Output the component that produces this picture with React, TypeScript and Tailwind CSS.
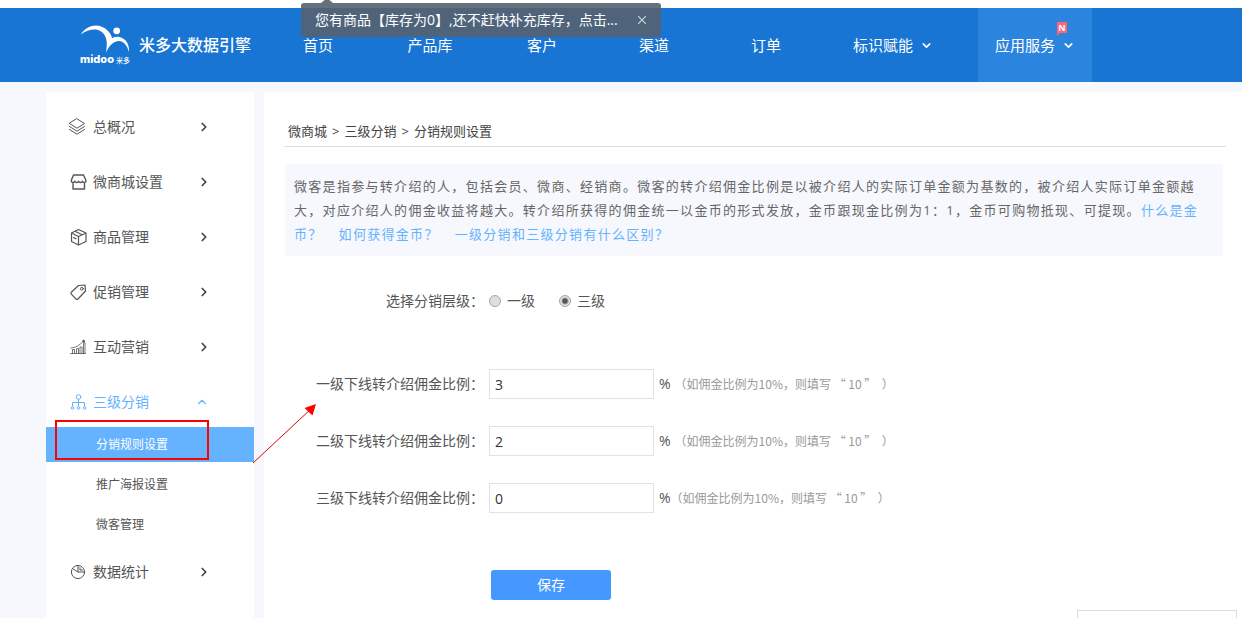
import { useState, type ReactNode } from "react";
import { ChevronDown, ChevronRight, ChevronUp, X } from "lucide-react";

const NAV = ["首页", "产品库", "客户", "渠道", "订单"];

const SUB_ITEMS = ["分销规则设置", "推广海报设置", "微客管理"];

const RATE_FIELDS = [
  { id: "rate-1", label: "一级下线转介绍佣金比例：", value: "3", hintGap: "ml-1" },
  { id: "rate-2", label: "二级下线转介绍佣金比例：", value: "2", hintGap: "ml-1" },
  { id: "rate-3", label: "三级下线转介绍佣金比例：", value: "0", hintGap: "ml-0" },
];

function Icon({ children }: { children: ReactNode }) {
  return (
    <svg
      width="18"
      height="18"
      viewBox="0 0 18 18"
      fill="none"
      stroke="currentColor"
      strokeLinejoin="round"
      strokeLinecap="round"
      className="flex-none"
      aria-hidden="true"
    >
      {children}
    </svg>
  );
}

const ICONS = {
  overview: (
    <Icon>
      <path d="M8 .8 15.500 5.500 8 10.200.5 5.500Z" />
      <path d="M.5 8.500 8 13.200l7.500-4.700M.5 11.500 8 16.200l7.500-4.700" />
    </Icon>
  ),
  shop: (
    <Icon>
      <path strokeWidth="1.4" d="M4.500 2h10L17 7.500c0 2.500-2.800 2.700-3.600.7-.6 1.800-3.200 1.800-3.800 0-.6 1.800-3.200 1.800-3.800 0-.8 2-3.600 1.800-3.600-.7ZM4 10.500v5.500h11.500v-5.500" />
    </Icon>
  ),
  goods: (
    <Icon>
      <path strokeWidth="1.2" d="M9.500 1.500 17 5v8.500L9.500 17 2.500 13.500V5ZM2.500 5l7 3.500L17 5M9.500 8.500V17M6 3.300l7.200 3.500M4.500 9.500l2.500 1.300" />
    </Icon>
  ),
  promo: (
    <Icon>
      <path strokeWidth="1.2" d="M9.500 2.500 16 2l.5 6-7.500 8c-.6.6-1.400.6-2 0L2.300 11.200c-.6-.6-.6-1.400 0-2Z" />
      <circle cx="12.800" cy="5.700" r="1.400" />
    </Icon>
  ),
  interact: (
    <Icon>
      <path strokeWidth=".8" d="M1.500 15.500h15M3.500 15.500v-4h2v4M7.500 15.500v-5h2v5M11 15.500v-6.500h2v6.500M14.500 15.500v-11h1.500v11" />
      <path strokeWidth=".8" d="M2 10c5-.5 8-2.500 12-6.500" />
      <circle cx="14.500" cy="3" r=".8" fill="currentColor" />
    </Icon>
  ),
  distribution: (
    <Icon>
      <circle cx="9.500" cy="4" r="2.300" />
      <path d="M9.500 6.500v7M3.500 13.500v-4h12v4" />
      <circle cx="3.500" cy="15" r="1.300" />
      <circle cx="9.500" cy="15" r="1.300" />
      <circle cx="15.500" cy="15" r="1.300" />
    </Icon>
  ),
  stats: (
    <Icon>
      <circle cx="9" cy="9" r="6.600" />
      <path d="M9 2.400V9h6.600M9 9 3.500 5.500M11 4.500v2.500h2.500" />
    </Icon>
  ),
};

function Logo() {
  return (
    <a href="#" className="flex w-[182px] flex-none items-center gap-[9px] text-white">
      <svg width="50" height="40" viewBox="0 0 50 40" fill="currentColor" className="flex-none" aria-label="midoo 米多">
        <path d="M.7 9.500C8-1.500 20-1.500 27 5c3 2.800 4.500 5 5 8.200 2.500-1.300 5.500-1.700 8-1C46 14 49.500 19 49 27 47 20 43.500 16 39 16c-6 .3-10 5-13 11.500.8-6 1.500-10.500-.5-15.500C22 3 11 2 .7 9.500Z" />
        <circle cx="36.700" cy="5.800" r="3.400" />
        <text x="0" y="38" fontSize="11" fontWeight="800" fontFamily="Inter, sans-serif">
          midoo
        </text>
        <text x="36" y="38" fontSize="7" fontWeight="500" fontFamily="Noto Sans CJK SC, sans-serif">
          米多
        </text>
      </svg>
      <span className="whitespace-nowrap text-base font-medium">米多大数据引擎</span>
    </a>
  );
}

function Header() {
  return (
    <header className="mt-2 flex h-[74px] flex-none bg-[#1875d3] pl-20 text-[15px] text-white">
      <Logo />
      <nav className="flex">
        {NAV.map((name) => (
          <a key={name} href="#" className="flex w-28 items-center justify-center">
            {name}
          </a>
        ))}
        <a href="#" className="mx-[14px] flex w-[114px] items-center gap-[7px] pl-[17px]">
          标识赋能
          <ChevronDown size={13} strokeWidth={3} />
        </a>
        <a href="#" className="relative mx-[14px] flex w-[114px] items-center gap-[7px] bg-[#2b84de] pl-[17px]">
          应用服务
          <ChevronDown size={13} strokeWidth={3} />
          <span className="absolute left-[79px] top-[14px] h-[11px] w-[10px] bg-[#ff6478] text-center text-[9px] font-bold leading-[11px]">
            N
            <span className="absolute left-0 top-full border-r-[3px] border-t-[3px] border-r-transparent border-t-[#ff6478]" />
          </span>
        </a>
      </nav>
    </header>
  );
}

function StockToast({ onClose }: { onClose: () => void }) {
  return (
    <div className="absolute left-[301px] top-[3px] flex h-[34px] w-[360px] items-center justify-between rounded-[3px] bg-[#556270]/90 pl-[14px] pr-3 text-sm text-white">
      <span className="absolute -top-[5px] left-5 border-x-[6px] border-b-[5px] border-x-transparent border-b-[#556270]/90" />
      <span className="whitespace-nowrap">您有商品【库存为0】,还不赶快补充库存，点击...</span>
      <button type="button" aria-label="关闭" onClick={onClose} className="cursor-pointer text-[#c3c9cf]">
        <X size={14} strokeWidth={2} />
      </button>
    </div>
  );
}

function MenuRow({ icon, name }: { icon: ReactNode; name: string }) {
  return (
    <li className="mb-[5px]">
      <a href="#" className="flex h-[50px] items-center pl-[23px] pr-[43px]">
        {icon}
        <span className="ml-[6px] flex-1">{name}</span>
        <ChevronRight size={14} strokeWidth={3} className="text-[#444]" />
      </a>
    </li>
  );
}

function Sidebar() {
  return (
    <aside className="w-[208px] flex-none bg-white pt-[10px] text-sm text-[#555]">
      <ul>
        <MenuRow icon={ICONS.overview} name="总概况" />
        <MenuRow icon={ICONS.shop} name="微商城设置" />
        <MenuRow icon={ICONS.goods} name="商品管理" />
        <MenuRow icon={ICONS.promo} name="促销管理" />
        <MenuRow icon={ICONS.interact} name="互动营销" />
        <li className="relative mb-[5px]">
          <a href="#" className="flex h-[50px] items-center pl-[23px] pr-[45px] text-[#65b2ff]">
            {ICONS.distribution}
            <span className="ml-[6px] flex-1">三级分销</span>
            <ChevronUp size={14} strokeWidth={2} />
          </a>
          <ul className="flex flex-col gap-[5px] text-xs">
            {SUB_ITEMS.map((name, i) => (
              <li key={name}>
                <a
                  href="#"
                  className={`flex h-[35px] items-center pl-[50px] ${i === 0 ? "bg-[#65b2ff] text-white" : ""}`}
                >
                  {name}
                </a>
              </li>
            ))}
          </ul>
          {/* red frame and arrow pointing from the menu to the form */}
          <span className="pointer-events-none absolute left-[9px] top-[43px] h-10 w-[154px] border-2 border-[#f00]" />
          <svg
            width="66"
            height="62"
            viewBox="0 0 66 62"
            className="pointer-events-none absolute left-[206px] top-[26px]"
            aria-hidden="true"
          >
            <path d="M1 60 60 5" stroke="#d00" />
            <path d="M64 1 52.500 5 60.500 12.500Z" fill="#f00" />
          </svg>
        </li>
        <MenuRow icon={ICONS.stats} name="数据统计" />
      </ul>
    </aside>
  );
}

function LevelRadio({ name, checked, onChange }: { name: string; checked: boolean; onChange: () => void }) {
  return (
    <label className="flex items-center gap-[6px]">
      <input
        type="radio"
        name="level"
        checked={checked}
        onChange={onChange}
        className="h-3 w-3 appearance-none rounded-full border border-[#a6a6a6] bg-[#dedede] checked:bg-[radial-gradient(circle,#555_0_2px,#e4e4e4_4px)]"
      />
      {name}
    </label>
  );
}

export default function App() {
  const [toast, setToast] = useState(true);
  const [level, setLevel] = useState("三级");

  return (
    <div className="relative flex min-h-screen flex-col overflow-hidden bg-white font-['Open_Sans','Noto_Sans_CJK_SC',sans-serif]">
      <Header />
      <div className="flex flex-1 gap-[10px] bg-[#f6f8fd] pl-[46px] pt-[10px]">
        <Sidebar />
        <main className="min-w-0 flex-1 bg-white pl-5 pr-4 text-sm text-[#555]">
          <nav className="flex gap-[5px] border-b border-[#ddd] pb-[5px] pl-1 pt-[29px] text-[13px] leading-5 text-[#444]">
            <a href="#">微商城</a>
            <span>&gt;</span>
            <a href="#">三级分销</a>
            <span>&gt;</span>
            <span>分销规则设置</span>
          </nav>

          <p className="ml-px mr-[3px] mt-[17px] bg-[#f6f8fd] py-[10px] pl-[9px] pr-[19px] text-[13px] leading-6 tracking-widest text-[#666]">
            微客是指参与转介绍的人，包括会员、微商、经销商。微客的转介绍佣金比例是以被介绍人的实际订单金额为基数的，被介绍人实际订单金额越大，对应介绍人的佣金收益将越大。转介绍所获得的佣金统一以金币的形式发放，金币跟现金比例为1：1，金币可购物抵现、可提现。
            <a href="#" className="mr-4 text-[#65b2ff]">什么是金币？</a>
            <a href="#" className="mr-4 text-[#65b2ff]">如何获得金币？</a>
            <a href="#" className="text-[#65b2ff]">一级分销和三级分销有什么区别？</a>
          </p>

          <form onSubmit={(e) => e.preventDefault()}>
            <fieldset className="mt-[35px] flex h-5 items-center">
              <legend className="float-left w-[200px] text-right">选择分销层级：</legend>
              <div className="ml-[5px] flex gap-6">
                {["一级", "三级"].map((name) => (
                  <LevelRadio key={name} name={name} checked={level === name} onChange={() => setLevel(name)} />
                ))}
              </div>
            </fieldset>

            <div className="mt-[58px] flex flex-col gap-[27px]">
              {RATE_FIELDS.map((field) => (
                <div key={field.id} className="flex h-[30px] items-center">
                  <label htmlFor={field.id} className="w-[200px] flex-none text-right">
                    {field.label}
                  </label>
                  <input
                    id={field.id}
                    type="text"
                    defaultValue={field.value}
                    className="ml-[5px] h-[30px] w-[165px] border border-[#e1e1e6] px-[5px] text-[#333]"
                  />
                  <span className="ml-[5px]">%</span>
                  <span
                    className={`whitespace-pre font-['Noto_Sans_CJK_SC',sans-serif] text-xs text-[#999] ${field.hintGap}`}
                  >
                    （如佣金比例为10%，则填写 “ 10 ”  ）
                  </span>
                </div>
              ))}
            </div>

            <button
              type="submit"
              className="ml-[207px] mt-[57px] h-[30px] w-[120px] cursor-pointer rounded-[3px] bg-[#4498ff] text-white"
            >
              保存
            </button>
          </form>
        </main>
      </div>

      {toast && <StockToast onClose={() => setToast(false)} />}
      <div className="absolute bottom-0 right-[5px] h-2 w-40 border border-b-0 border-[#ddd] bg-white" />
    </div>
  );
}
